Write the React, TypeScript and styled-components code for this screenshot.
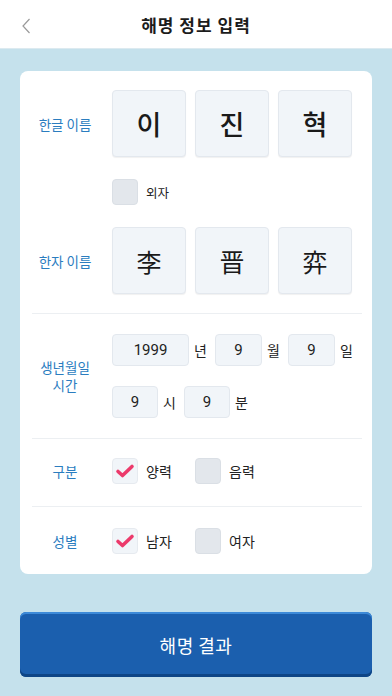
import React from 'react';
import styled, { createGlobalStyle } from 'styled-components';

const GlobalStyle = createGlobalStyle`
  html, body {
    margin: 0;
    padding: 0;
    background: #c5e1ec;
  }
  body {
    font-family: 'Noto Sans CJK KR', 'Noto Sans', sans-serif;
    color: #222;
  }
`;

const Page = styled.div`
  width: 392px;
  height: 696px;
  background: #c5e1ec;
  display: flex;
  flex-direction: column;
  overflow: hidden;
`;

const Header = styled.header`
  height: 48px;
  background: #fff;
  border-bottom: 1px solid #dceaf0;
  display: flex;
  align-items: center;
  justify-content: center;
  position: relative;
  flex-shrink: 0;
`;

const BackButton = styled.button`
  position: absolute;
  left: 18px;
  top: 16px;
  width: 16px;
  height: 20px;
  padding: 0;
  border: 0;
  background: none;
  display: flex;
  align-items: center;
  justify-content: center;
`;

const Title = styled.h1`
  margin: 0;
  font-size: 17px;
  font-weight: 700;
  letter-spacing: 1px;
  color: #1c1c1c;
`;

const Body = styled.main`
  padding: 22px 20px 0;
  display: flex;
  flex-direction: column;
`;

const Card = styled.section`
  background: #fff;
  border-radius: 8px;
  padding: 0 10px 0 12px;
  height: 503px;
  box-sizing: border-box;
`;

const Section = styled.div<{ $pt: number; $pb: number; $last?: boolean }>`
  padding-top: ${(p) => p.$pt}px;
  padding-bottom: ${(p) => p.$pb}px;
  border-bottom: ${(p) => (p.$last ? 'none' : '1px solid #eceff2')};
  display: flex;
  flex-direction: column;
`;

const Row = styled.div<{ $my?: number }>`
  display: flex;
  align-items: center;
  margin: ${(p) => p.$my ?? 0}px 0;
`;

const Label = styled.div`
  width: 66px;
  margin-right: 14px;
  text-align: center;
  font-size: 13.5px;
  line-height: 18px;
  color: #2b7dbf;
  flex-shrink: 0;
`;

const Fields = styled.div`
  display: flex;
  align-items: center;
  gap: 9px;
`;

const CharBox = styled.div<{ $hanja?: boolean }>`
  width: 74px;
  height: 67px;
  box-sizing: border-box;
  border-radius: 4px;
  background: #f1f5f9;
  border: 1px solid #e3e8ee;
  box-shadow: 0 1px 1px rgba(0, 0, 0, 0.06);
  display: flex;
  align-items: center;
  justify-content: center;
  font-size: ${(p) => (p.$hanja ? 25 : 27)}px;
  font-weight: ${(p) => (p.$hanja ? 400 : 500)};
  color: #1a1a1a;
`;

const NumBox = styled.div<{ $w: number }>`
  width: ${(p) => p.$w}px;
  height: 32px;
  box-sizing: border-box;
  border-radius: 4px;
  background: #f1f5f9;
  border: 1px solid #e3e8ee;
  display: flex;
  align-items: center;
  justify-content: center;
  font-family: 'Roboto', 'Noto Sans', sans-serif;
  font-size: 15px;
  color: #222;
`;

const Unit = styled.span`
  font-size: 14px;
  color: #222;
  margin: 0 9px 0 5px;
  width: 12px;
`;

const DateFields = styled.div`
  display: flex;
  flex-direction: column;
  gap: 20px;
`;

const DateLine = styled.div`
  display: flex;
  align-items: center;
`;

const Options = styled.div`
  display: flex;
  align-items: center;
`;

const Option = styled.label`
  display: flex;
  align-items: center;
  gap: 8px;
  width: 83px;
  font-size: 14px;
  color: #222;
`;

const Box = styled.span<{ $on?: boolean }>`
  width: 26px;
  height: 26px;
  box-sizing: border-box;
  border-radius: 4px;
  background: ${(p) => (p.$on ? '#f1f5f9' : '#e3e7ec')};
  border: 1px solid ${(p) => (p.$on ? '#e6eaef' : '#dadfe5')};
  display: flex;
  align-items: center;
  justify-content: center;
  flex-shrink: 0;
`;

const SmallText = styled.span`
  font-size: 12.5px;
`;

const SubmitButton = styled.button`
  margin-top: 38px;
  height: 65px;
  width: 100%;
  border: 0;
  border-radius: 6px;
  background: #1b5fae;
  box-shadow: inset 0 2px 0 #3d8ad8, inset 0 -3px 0 #0e4586;
  color: #fff;
  font-family: 'Noto Sans CJK KR', 'Noto Sans', sans-serif;
  font-size: 18px;
  font-weight: 400;
  letter-spacing: 0.5px;
`;

const Check = () => (
  <svg width="20" height="16" viewBox="0 0 20 16">
    <path
      d="M3 8.5 L7.5 12.5 L17 3.5"
      fill="none"
      stroke="#ec3a6b"
      strokeWidth="3.6"
      strokeLinecap="round"
      strokeLinejoin="round"
    />
  </svg>
);

const CheckOption = ({ on, text }: { on?: boolean; text: string }) => (
  <Option>
    <Box $on={on}>{on && <Check />}</Box>
    {text}
  </Option>
);

const App = () => {
  return (
    <>
      <GlobalStyle />
      <Page>
        <Header>
          <BackButton aria-label="back">
            <svg width="10" height="16" viewBox="0 0 10 16">
              <path d="M8.5 1 L2 8 L8.5 15" fill="none" stroke="#9a9a9a" strokeWidth="1.2" />
            </svg>
          </BackButton>
          <Title>해명 정보 입력</Title>
        </Header>
        <Body>
          <Card>
            <Section $pt={19} $pb={19}>
              <Row>
                <Label>한글 이름</Label>
                <Fields>
                  <CharBox>이</CharBox>
                  <CharBox>진</CharBox>
                  <CharBox>혁</CharBox>
                </Fields>
              </Row>
              <Row $my={22}>
                <Label />
                <Option>
                  <Box />
                  <SmallText>외자</SmallText>
                </Option>
              </Row>
              <Row>
                <Label>한자 이름</Label>
                <Fields>
                  <CharBox $hanja>李</CharBox>
                  <CharBox $hanja>晋</CharBox>
                  <CharBox $hanja>弈</CharBox>
                </Fields>
              </Row>
            </Section>
            <Section $pt={20} $pb={20}>
              <Row>
                <Label>
                  생년월일
                  <br />
                  시간
                </Label>
                <DateFields>
                  <DateLine>
                    <NumBox $w={77}>1999</NumBox>
                    <Unit>년</Unit>
                    <NumBox $w={47}>9</NumBox>
                    <Unit>월</Unit>
                    <NumBox $w={47}>9</NumBox>
                    <Unit>일</Unit>
                  </DateLine>
                  <DateLine>
                    <NumBox $w={46}>9</NumBox>
                    <Unit>시</Unit>
                    <NumBox $w={46}>9</NumBox>
                    <Unit>분</Unit>
                  </DateLine>
                </DateFields>
              </Row>
            </Section>
            <Section $pt={19} $pb={22}>
              <Row>
                <Label>구분</Label>
                <Options>
                  <CheckOption on text="양력" />
                  <CheckOption text="음력" />
                </Options>
              </Row>
            </Section>
            <Section $pt={21} $pb={20} $last>
              <Row>
                <Label>성별</Label>
                <Options>
                  <CheckOption on text="남자" />
                  <CheckOption text="여자" />
                </Options>
              </Row>
            </Section>
          </Card>
          <SubmitButton>해명 결과</SubmitButton>
        </Body>
      </Page>
    </>
  );
};

export default App;
